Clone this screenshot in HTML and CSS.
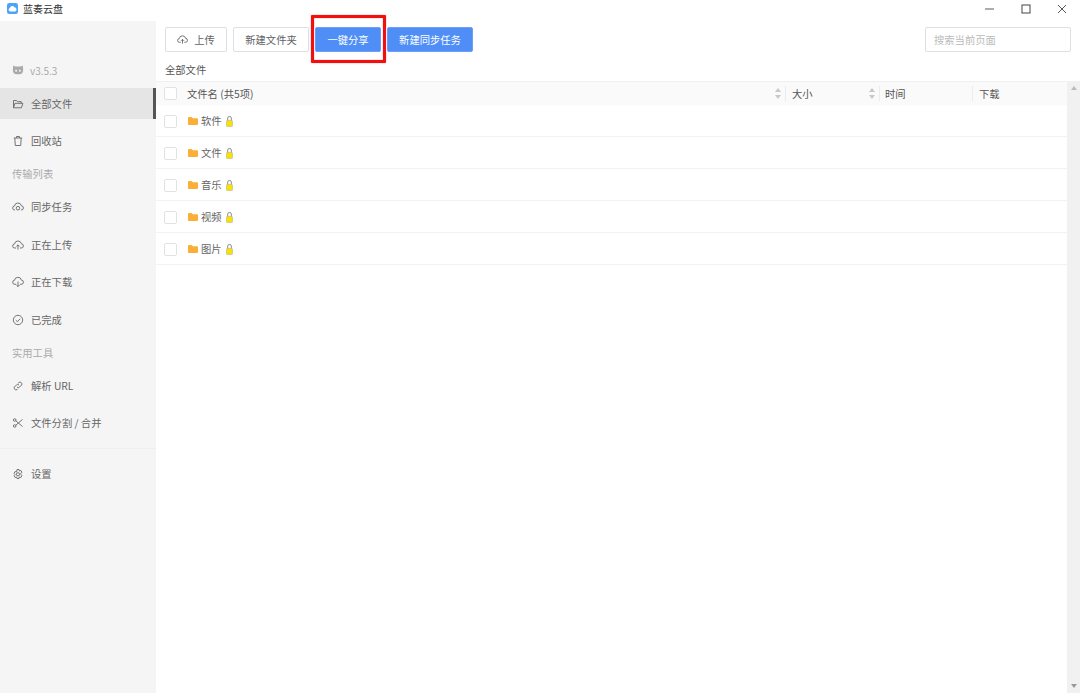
FILE: index.html
```html
<!DOCTYPE html>
<html lang="zh-CN">
<head>
<meta charset="utf-8">
<title>蓝奏云盘</title>
<link rel="stylesheet" href="styles.css">
</head>
<body>
<div class="app">
  <header class="titlebar">
    <div class="brand">
      <svg class="logo" viewBox="0 0 12 12"><rect width="12" height="12" rx="2.500" fill="#4da3f5"/><path d="M3.400 9.200a1.900 1.900 0 0 1-.3-3.700 2.700 2.700 0 0 1 5-.9 2.400 2.400 0 0 1 .9 4.600z" fill="#fff"/></svg>
      <span>蓝奏云盘</span>
    </div>
    <div class="winctl">
      <svg class="winicon" viewBox="0 0 10 10"><path d="M0 5h9" stroke="#777" stroke-width="1.200"/></svg>
      <svg class="winicon" viewBox="0 0 10 10"><rect x="1" y="1" width="8" height="8" fill="none" stroke="#444" stroke-width="1"/></svg>
      <svg class="winicon" viewBox="0 0 10 10"><path d="M1 1l8 8M9 1l-8 8" stroke="#555" stroke-width="1"/></svg>
    </div>
  </header>
  <div class="body">
    <aside class="sidebar">
      <div class="version">
        <svg class="icon" viewBox="0 0 12 12"><path d="M1.200 1.500l2 1.100h5.600l2-1.100.3 3.500c.3 2.800-1 5.200-3 5.200H3.900c-2 0-3.300-2.400-3-5.200z" fill="#aaa"/><circle cx="4.100" cy="6.800" r="1" fill="#f5f5f5"/><circle cx="7.900" cy="6.800" r="1" fill="#f5f5f5"/></svg>
        <span>v3.5.3</span>
      </div>
      <a class="nav active">
        <svg class="icon" viewBox="0 0 12 12" fill="none" stroke="#666" stroke-width=".9"><path d="M1.500 9.800V2.500h3l1 1.200h3.700v1.600M1.500 9.800l1.400-4.500h8l-1.500 4.500z"/></svg>
        <span>全部文件</span>
      </a>
      <a class="nav m6">
        <svg class="icon" viewBox="0 0 12 12" fill="none" stroke="#666" stroke-width=".9"><path d="M1.800 3h8.400M4.500 3V1.500h3V3M2.800 3l.5 7.500h5.400l.5-7.500"/></svg>
        <span>回收站</span>
      </a>
      <div class="group m10">传输列表</div>
      <a class="nav m9">
        <svg class="icon" viewBox="0 0 12 12" fill="none" stroke="#666" stroke-width=".9"><path d="M3 9H2.800a2 2 0 0 1-.3-4A3.500 3.500 0 0 1 9.400 4.800 2.100 2.100 0 0 1 9.200 9H9"/><circle cx="6" cy="7.200" r="1.800"/></svg>
        <span>同步任务</span>
      </a>
      <a class="nav m7">
        <svg class="icon" viewBox="0 0 12 12" fill="none" stroke="#666" stroke-width=".9"><path d="M4 9H2.800a2 2 0 0 1-.3-4A3.500 3.500 0 0 1 9.400 4.800 2.100 2.100 0 0 1 9.200 9H8M6 10.500V6M4.400 7.400L6 5.800l1.600 1.600"/></svg>
        <span>正在上传</span>
      </a>
      <a class="nav m6">
        <svg class="icon" viewBox="0 0 12 12" fill="none" stroke="#666" stroke-width=".9"><path d="M4 8.300H2.800a2 2 0 0 1-.3-4A3.500 3.500 0 0 1 9.400 4.100 2.100 2.100 0 0 1 9.200 8.300H8M6 5.500V10.500M4.400 9L6 10.600 7.600 9"/></svg>
        <span>正在下载</span>
      </a>
      <a class="nav m7">
        <svg class="icon" viewBox="0 0 12 12" fill="none" stroke="#666" stroke-width=".9"><circle cx="6" cy="6" r="4.700"/><path d="M3.800 6.200l1.600 1.500 2.800-3"/></svg>
        <span>已完成</span>
      </a>
      <div class="group m10">实用工具</div>
      <a class="nav m9">
        <svg class="icon" viewBox="0 0 12 12" fill="none" stroke="#666" stroke-width=".9"><path d="M5 7a1.800 1.800 0 0 0 2.600 0l2-2A1.900 1.900 0 0 0 7 2.400l-.8.8M7 5a1.800 1.800 0 0 0-2.600 0l-2 2A1.900 1.900 0 0 0 5 9.600l.8-.8"/></svg>
        <span>解析 URL</span>
      </a>
      <a class="nav m6">
        <svg class="icon" viewBox="0 0 12 12" fill="none" stroke="#666" stroke-width=".9"><circle cx="2.700" cy="3" r="1.300"/><circle cx="2.700" cy="9" r="1.300"/><path d="M3.800 3.800L10.500 9.500M3.800 8.200L10.500 2.500"/></svg>
        <span>文件分割 / 合并</span>
      </a>
      <div class="divider m10"></div>
      <a class="nav m9">
        <svg class="icon" viewBox="0 0 12 12" fill="none" stroke="#666" stroke-width=".9"><path d="M5 1h2l.4 1.500 1.500-.5 1 1.700L8.800 4.800 9 6l.9 1.200-1 1.800-1.500-.5L7 10H5l-.4-1.500-1.500.5-1-1.800L3 6l-.9-1.200 1-1.800 1.500.5z" transform="translate(0 .5)"/><circle cx="6" cy="6.300" r="1.600"/></svg>
        <span>设置</span>
      </a>
    </aside>
    <main class="main">
      <div class="toolbar">
        <button class="btn upload">
          <svg class="btnicon" viewBox="0 0 12 12" fill="none" stroke="#666"><path d="M4 9H2.800a2 2 0 0 1-.3-4A3.500 3.500 0 0 1 9.400 4.800 2.100 2.100 0 0 1 9.200 9H8M6 10.500V6M4.400 7.400L6 5.800l1.600 1.600"/></svg>
          <span>上传</span>
        </button>
        <button class="btn folder">新建文件夹</button>
        <button class="btn primary share">一键分享</button>
        <button class="btn primary sync">新建同步任务</button>
        <input class="search" placeholder="搜索当前页面">
      </div>
      <div class="crumb">全部文件</div>
      <div class="tablewrap">
        <div class="table">
          <div class="thead">
            <span class="check"></span>
            <div class="th th-name"><span>文件名 (共5项)</span><span class="sort"></span></div>
            <div class="th th-size"><span>大小</span><span class="sort"></span></div>
            <div class="th th-time"><span>时间</span></div>
            <div class="th th-dl"><span>下载</span></div>
          </div>
          <div class="row"><span class="check"></span><svg class="folder-i" viewBox="0 0 10 8"><path d="M0 1a1 1 0 0 1 1-1h2.700l1 1.200H9a1 1 0 0 1 1 1V7a1 1 0 0 1-1 1H1a1 1 0 0 1-1-1z" fill="#fbaf36"/></svg><span class="fname">软件</span><svg class="lock" viewBox="0 0 7 12"><path d="M1.700 6V3.200a1.800 1.800 0 0 1 3.600 0V6" fill="none" stroke="#888"/><rect x=".5" y="5.500" width="6" height="6" rx=".8" fill="#f9e000" stroke="#b5b5a0" stroke-width=".6"/></svg></div>
          <div class="row"><span class="check"></span><svg class="folder-i" viewBox="0 0 10 8"><path d="M0 1a1 1 0 0 1 1-1h2.700l1 1.200H9a1 1 0 0 1 1 1V7a1 1 0 0 1-1 1H1a1 1 0 0 1-1-1z" fill="#fbaf36"/></svg><span class="fname">文件</span><svg class="lock" viewBox="0 0 7 12"><path d="M1.700 6V3.200a1.800 1.800 0 0 1 3.600 0V6" fill="none" stroke="#888"/><rect x=".5" y="5.500" width="6" height="6" rx=".8" fill="#f9e000" stroke="#b5b5a0" stroke-width=".6"/></svg></div>
          <div class="row"><span class="check"></span><svg class="folder-i" viewBox="0 0 10 8"><path d="M0 1a1 1 0 0 1 1-1h2.700l1 1.200H9a1 1 0 0 1 1 1V7a1 1 0 0 1-1 1H1a1 1 0 0 1-1-1z" fill="#fbaf36"/></svg><span class="fname">音乐</span><svg class="lock" viewBox="0 0 7 12"><path d="M1.700 6V3.200a1.800 1.800 0 0 1 3.600 0V6" fill="none" stroke="#888"/><rect x=".5" y="5.500" width="6" height="6" rx=".8" fill="#f9e000" stroke="#b5b5a0" stroke-width=".6"/></svg></div>
          <div class="row"><span class="check"></span><svg class="folder-i" viewBox="0 0 10 8"><path d="M0 1a1 1 0 0 1 1-1h2.700l1 1.200H9a1 1 0 0 1 1 1V7a1 1 0 0 1-1 1H1a1 1 0 0 1-1-1z" fill="#fbaf36"/></svg><span class="fname">视频</span><svg class="lock" viewBox="0 0 7 12"><path d="M1.700 6V3.200a1.800 1.800 0 0 1 3.600 0V6" fill="none" stroke="#888"/><rect x=".5" y="5.500" width="6" height="6" rx=".8" fill="#f9e000" stroke="#b5b5a0" stroke-width=".6"/></svg></div>
          <div class="row"><span class="check"></span><svg class="folder-i" viewBox="0 0 10 8"><path d="M0 1a1 1 0 0 1 1-1h2.700l1 1.200H9a1 1 0 0 1 1 1V7a1 1 0 0 1-1 1H1a1 1 0 0 1-1-1z" fill="#fbaf36"/></svg><span class="fname">图片</span><svg class="lock" viewBox="0 0 7 12"><path d="M1.700 6V3.200a1.800 1.800 0 0 1 3.600 0V6" fill="none" stroke="#888"/><rect x=".5" y="5.500" width="6" height="6" rx=".8" fill="#f9e000" stroke="#b5b5a0" stroke-width=".6"/></svg></div>
        </div>
        <div class="scrollbar"><span class="arrow up"></span><span class="arrow down"></span></div>
      </div>
    </main>
  </div>
  <div class="annotation"></div>
</div>
</body>
</html>
```
FILE: styles.css
```css
* { box-sizing: border-box; }
html, body { margin: 0; height: 100%; overflow: hidden; }
body { font-family: "Noto Sans CJK SC", "Liberation Sans", sans-serif; font-size: 10.3px; color: #606266; background: #fff; }
.app { position: relative; width: 1080px; height: 693px; display: flex; flex-direction: column; }

.titlebar { height: 21px; flex: none; display: flex; justify-content: space-between; align-items: flex-start; }
.brand { display: flex; align-items: center; gap: 5px; padding-left: 7px; font-size: 10px; color: #333; height: 17px; }
.logo { width: 11px; height: 11px; }
.winctl { display: flex; align-items: center; gap: 26px; padding-right: 13px; height: 17px; }
.winicon { width: 10px; height: 10px; }

.body { flex: 1; display: flex; min-height: 0; }
.sidebar { width: 156px; flex: none; background: #f5f5f5; display: flex; flex-direction: column; padding-top: 40px; }
.version { display: flex; align-items: center; height: 18px; padding-left: 12px; gap: 6px; color: #aaa; font-size: 10px; }
.icon { width: 12px; height: 12px; flex: none; }
.nav { display: flex; align-items: center; gap: 7px; height: 31px; padding-left: 12px; color: #666; flex: none; }
.nav.active { background: #e5e5e5; border-right: 3px solid #555; margin-top: 9px; }
.m6 { margin-top: 6px; }
.m7 { margin-top: 7px; }
.m9 { margin-top: 9px; }
.m10 { margin-top: 10px; }
.group { height: 16px; line-height: 16px; padding-left: 12px; color: #aaa; flex: none; }
.divider { height: 1px; background: #eee; flex: none; }

.main { flex: 1; min-width: 0; display: flex; flex-direction: column; }
.toolbar { display: flex; align-items: center; gap: 6px; padding: 6px 9px 0; height: 31px; flex: none; }
.btn { height: 25px; border: 1px solid #dcdfe6; border-radius: 2px; background: #fff; color: #606266; font: inherit; display: flex; align-items: center; justify-content: center; padding: 0; }
.upload { width: 62px; gap: 6px; }
.btnicon { width: 11px; height: 11px; }
.folder { width: 76px; }
.share { width: 66px; }
.sync { width: 86px; }
.primary { background: #4f8ef7; border-color: #6c9ff5; color: #fff; }
.search { margin-left: auto; width: 146px; height: 25px; border: 1px solid #dcdfe6; border-radius: 2px; padding: 0 8px; font: inherit; outline: none; }
.search::placeholder { color: #bbb; }
.crumb { height: 29px; flex: none; padding: 9px 0 0 9px; line-height: 18px; color: #555; }

.tablewrap { flex: 1; min-height: 0; display: flex; }
.table { flex: 1; min-width: 0; }
.thead { height: 24px; display: flex; align-items: center; background: #fafafa; border-top: 1px solid #f0f0f0; padding-left: 8px; color: #555; }
.check { width: 13px; height: 13px; flex: none; border: 1px solid #e2e2e2; border-radius: 2px; background: #fff; }
.th { height: 15px; display: flex; align-items: center; justify-content: space-between; border-right: 1px solid #ececec; padding-right: 3px; }
.th-name { width: 599px; margin-left: 10px; }
.th-size { width: 94px; padding-left: 6px; }
.th-time { width: 93px; padding-left: 5px; }
.th-dl { flex: 1; padding-left: 6px; border-right: 0; }
.sort { width: 7px; height: 11px; display: block; position: relative; }
.sort::before, .sort::after { content: ""; position: absolute; left: 0; border-left: 3.5px solid transparent; border-right: 3.5px solid transparent; }
.sort::before { top: 0; border-bottom: 4px solid #c8c8c8; }
.sort::after { bottom: 0; border-top: 4px solid #c8c8c8; }
.row { height: 32px; display: flex; align-items: center; border-bottom: 1px solid #f2f2f2; padding: 1px 0 0 8px; color: #666; }
.folder-i { width: 10px; height: 8px; margin-left: 11px; flex: none; }
.fname { margin: 0 0 2px 3px; }
.lock { width: 7px; height: 12px; margin-left: 4px; flex: none; }

.scrollbar { width: 13px; flex: none; background: #f1f1f1; display: flex; flex-direction: column; justify-content: space-between; align-items: center; padding: 5px 0; }
.arrow { width: 0; height: 0; border-left: 3px solid transparent; border-right: 3px solid transparent; }
.arrow.up { border-bottom: 4px solid #bbb; }
.arrow.down { border-top: 4px solid #999; }

.annotation { position: absolute; left: 311px; top: 15px; width: 75px; height: 48px; border: 3px solid #f01010; border-radius: 1px; box-shadow: 0 0 1px #f01010, inset 0 0 1px #f01010; }
```
